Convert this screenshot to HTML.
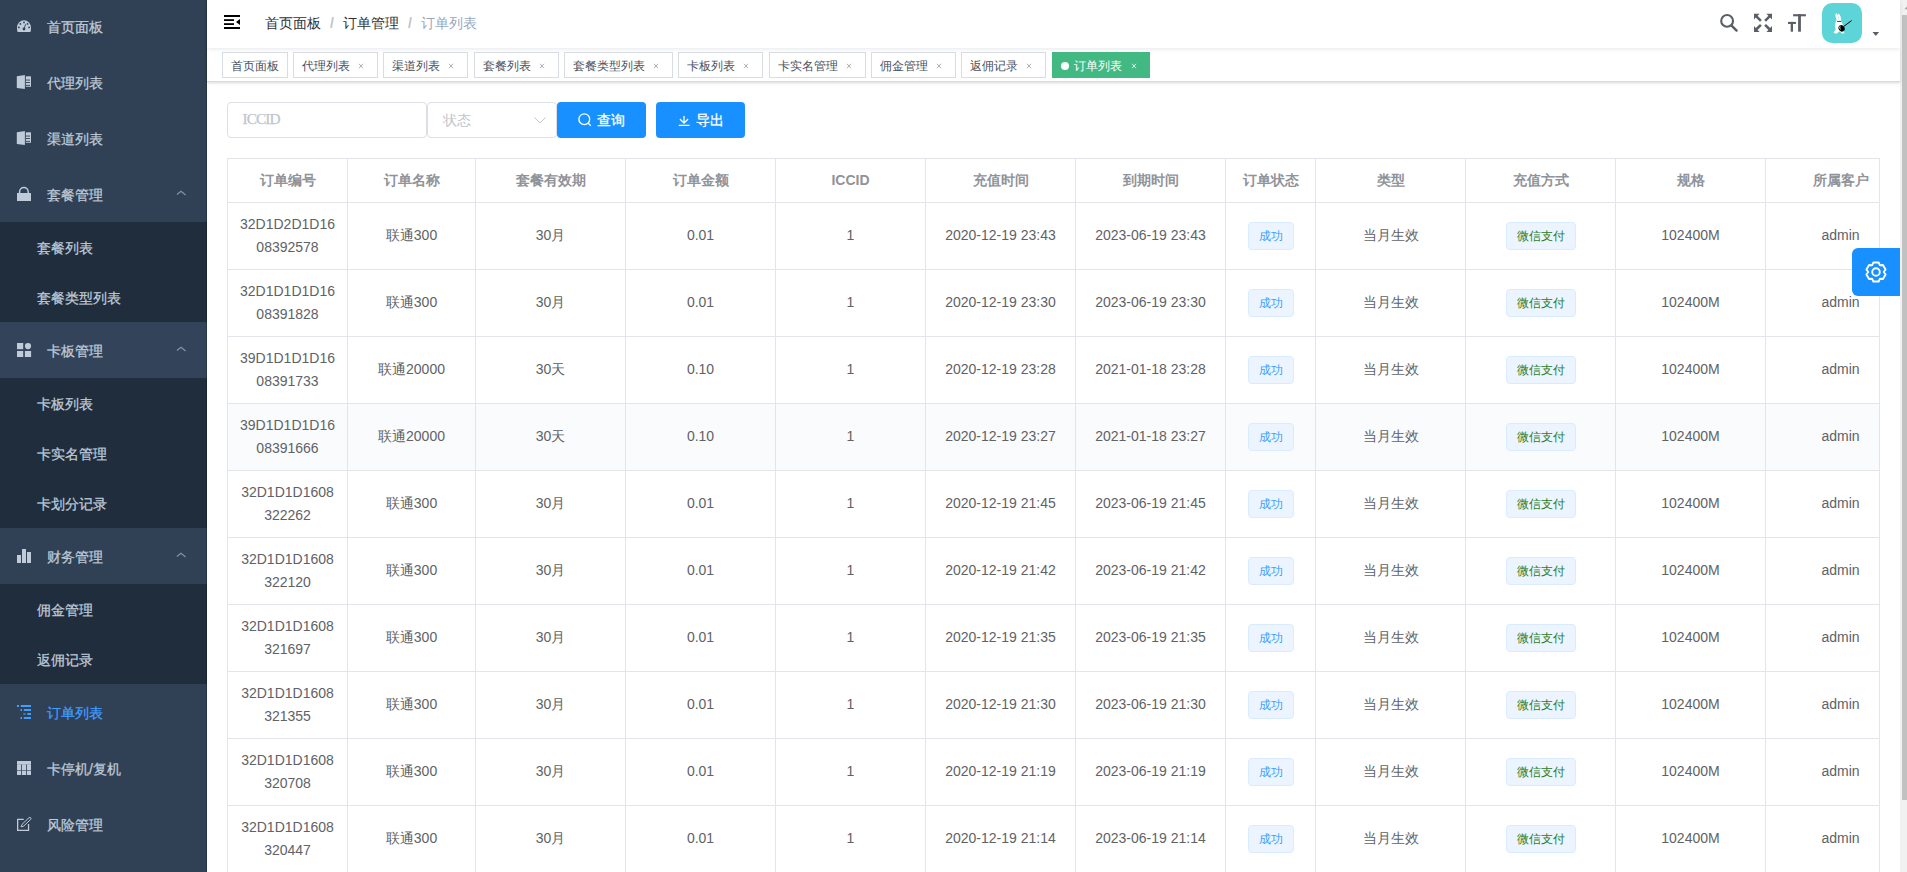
<!DOCTYPE html>
<html><head><meta charset="utf-8"><style>
*{box-sizing:border-box;margin:0;padding:0}
html,body{width:1907px;height:872px;overflow:hidden;background:#fff;font-family:"Liberation Sans",sans-serif;-webkit-font-smoothing:antialiased}
.abs{position:absolute}
/* sidebar */
.side{position:absolute;left:0;top:0;width:207px;height:872px;background:#304156;overflow:hidden}
.side .edge{position:absolute;left:206px;top:0;width:1px;height:872px;background:rgba(0,0,0,.18)}
.mi{position:absolute;left:0;width:207px;height:56px;line-height:56px;color:#bfcbd9;font-size:14px}
.mi .ic{position:absolute;left:15px;top:17px;width:18px;height:18px}
.mi .tx{position:absolute;left:47px;top:1px;-webkit-text-stroke:0.25px currentColor}
.mi .ar{position:absolute;left:176px;top:24px;width:10px;height:6px}
.sub{position:absolute;left:0;width:207px;background:#1f2d3d}
.si{position:absolute;left:0;width:207px;height:50px;line-height:50px;color:#bfcbd9;font-size:14px}
.si .tx{position:absolute;left:37px;top:1px;-webkit-text-stroke:0.25px currentColor}
.mi.act{color:#409eff}
/* navbar */
.nav{position:absolute;left:207px;top:0;width:1693px;height:48px;background:#fff;box-shadow:0 1px 4px rgba(0,21,41,.10);z-index:2}
.crumb{z-index:3}
.crumb{position:absolute;top:0;left:265px;height:48px;line-height:46px;font-size:14px;white-space:nowrap}
.crumb .a{color:#303133}
.crumb .sep{color:#c0c4cc;font-weight:bold;margin:0 9px}
.crumb .n{color:#97a8be}
/* tags */
.tags{position:absolute;left:207px;top:48px;width:1693px;height:34px;background:#fff;border-bottom:1px solid #dadada;box-shadow:0 1px 3px 0 rgba(0,0,0,.14),0 0 3px 0 rgba(0,0,0,.04);z-index:1}
.tg{position:absolute;top:4px;height:26px;line-height:26px;border:1px solid #d8dce5;color:#495060;background:#fff;font-size:12px;padding:0 8px;white-space:nowrap}
.tg .x{display:inline-block;width:15.5px;height:16px;vertical-align:-4px;color:#a0a6b0}.tg .x svg{position:relative;left:0px;top:0}
.tg.on{background:#42b983;border-color:#42b983;color:#fff}
.tg.on .x{color:#e8f5ee}
.tg.on .dot{display:inline-block;width:8px;height:8px;border-radius:50%;background:#fff;margin-right:2px;vertical-align:0px}
/* scrollbar */
.sb{position:absolute;left:1900px;top:0;width:7px;height:872px;background:#f1f1f1}
.sb .th{position:absolute;left:2px;top:15px;width:5px;height:785px;background:#c1c1c1}
/* filter */
.inp{position:absolute;top:102px;height:36px;border:1px solid #dcdfe6;border-radius:4px;background:#fff}
.ph{position:absolute;color:#c0c4cc;font-size:14px;line-height:34px}
.btn{position:absolute;top:102px;height:36px;width:89px;background:#1890ff;border-radius:4px;color:#fff;font-size:14px;line-height:36px}
/* table */
.tbl{position:absolute;left:227px;top:158px;width:1653px;height:760px;overflow:hidden;border-left:1px solid #e2e5ea;border-top:1px solid #e2e5ea}
.tbl::after{content:"";position:absolute;right:0;top:0;width:1px;height:100%;background:#e2e5ea}
table{border-collapse:separate;border-spacing:0;table-layout:fixed;width:1688px}
th,td{border-right:1px solid #e2e5ea;border-bottom:1px solid #e2e5ea;text-align:center;padding:10px 0;font-size:14px;vertical-align:middle}
th{color:#909399;font-weight:bold;height:44px}
td{color:#606266;height:67px}
.cell{line-height:23px;padding:0 10px;word-break:break-all}
tr.hover td{background:#fafbfd}
.tag{display:inline-block;height:28px;line-height:26px;padding:0 10px;font-size:12px;color:#409eff;background:#ecf5ff;border:1px solid #d9ecff;border-radius:4px;vertical-align:middle}
.tag.g{color:#2a7d2a}
.cell.s{position:relative;top:-1px}
/* right panel btn */
.rp{position:absolute;left:1852px;top:248px;width:48px;height:48px;background:#1890ff;border-radius:6px 0 0 6px}

.bt{-webkit-text-stroke:0.3px #fff}

</style></head><body>
<div class="side">
  <div class="mi" style="top:-2px"><svg class="ic" viewBox="0 0 18 18"><path d="M2.6 17 C2.1 15.6 2 14.5 2 12.5 A7 7.2 0 0 1 16 12.5 C16 14.5 15.9 15.6 15.4 17 Z" fill="#bfcbd9"/><g fill="#304156"><circle cx="5.4" cy="8.9" r="0.9"/><circle cx="9" cy="7.4" r="0.9"/><circle cx="12.5" cy="8.9" r="0.9"/><circle cx="3.9" cy="12.4" r="0.9"/><circle cx="14.1" cy="12.4" r="0.9"/><circle cx="9" cy="14" r="1.4"/></g><path d="M10.6 9.3 L9 14" stroke="#304156" stroke-width="0.9"/></svg><span class="tx">首页面板</span></div>
  <div class="mi" style="top:54px"><svg class="ic" viewBox="0 0 18 18"><path d="M1.8 5.2 L9.9 4 L9.9 18 L1.8 16.9 Z" fill="#bfcbd9"/><rect x="10.8" y="5.3" width="5.2" height="10.5" fill="#bfcbd9"/><g fill="#304156"><rect x="10.8" y="8.6" width="4.2" height="0.9"/><rect x="10.8" y="11.1" width="4.2" height="0.9"/><rect x="10.8" y="13.9" width="4.2" height="0.9"/></g></svg><span class="tx">代理列表</span></div>
  <div class="mi" style="top:110px"><svg class="ic" viewBox="0 0 18 18"><path d="M1.8 5.2 L9.9 4 L9.9 18 L1.8 16.9 Z" fill="#bfcbd9"/><rect x="10.8" y="5.3" width="5.2" height="10.5" fill="#bfcbd9"/><g fill="#304156"><rect x="10.8" y="8.6" width="4.2" height="0.9"/><rect x="10.8" y="11.1" width="4.2" height="0.9"/><rect x="10.8" y="13.9" width="4.2" height="0.9"/></g></svg><span class="tx">渠道列表</span></div>
  <div class="mi" style="top:166px"><svg class="ic" viewBox="0 0 18 18"><path d="M4.6 10.5 V8.8 A4.3 4.3 0 0 1 13.2 8.8 V10.5" fill="none" stroke="#bfcbd9" stroke-width="1.5"/><rect x="2" y="10" width="14" height="8" fill="#bfcbd9"/></svg><span class="tx">套餐管理</span><svg class="ar" viewBox="0 0 10 6"><path d="M0.9 4.5L5 1.3L9.6 5" fill="none" stroke="#8494a9" stroke-width="1.1"/></svg></div>
  <div class="sub" style="top:222px;height:100px">
    <div class="si" style="top:0"><span class="tx">套餐列表</span></div>
    <div class="si" style="top:50px"><span class="tx">套餐类型列表</span></div>
  </div>
  <div class="mi" style="top:322px;background:#33445a"><svg class="ic" viewBox="0 0 18 18"><g fill="#bfcbd9"><rect x="2" y="4" width="6.2" height="6.2"/><circle cx="13" cy="7.1" r="3.1"/><rect x="2" y="12" width="6.2" height="6.2"/><rect x="9.9" y="12" width="6.2" height="6.2"/></g></svg><span class="tx">卡板管理</span><svg class="ar" viewBox="0 0 10 6"><path d="M0.9 4.5L5 1.3L9.6 5" fill="none" stroke="#8494a9" stroke-width="1.1"/></svg></div>
  <div class="sub" style="top:378px;height:150px">
    <div class="si" style="top:0"><span class="tx">卡板列表</span></div>
    <div class="si" style="top:50px"><span class="tx">卡实名管理</span></div>
    <div class="si" style="top:100px"><span class="tx">卡划分记录</span></div>
  </div>
  <div class="mi" style="top:528px"><svg class="ic" viewBox="0 0 18 18"><g fill="#bfcbd9"><rect x="2" y="10" width="4" height="8"/><rect x="7" y="4" width="4" height="14"/><rect x="12" y="7" width="4" height="11"/></g></svg><span class="tx">财务管理</span><svg class="ar" viewBox="0 0 10 6"><path d="M0.9 4.5L5 1.3L9.6 5" fill="none" stroke="#8494a9" stroke-width="1.1"/></svg></div>
  <div class="sub" style="top:584px;height:100px">
    <div class="si" style="top:0"><span class="tx">佣金管理</span></div>
    <div class="si" style="top:50px"><span class="tx">返佣记录</span></div>
  </div>
  <div class="mi act" style="top:684px"><svg class="ic" viewBox="0 0 18 18"><g fill="#409eff"><rect x="2" y="4" width="2" height="2"/><rect x="5.8" y="4" width="10.2" height="2"/><rect x="5.5" y="8" width="1.5" height="2"/><rect x="8.8" y="8" width="7.2" height="2"/><rect x="8.3" y="12" width="2.5" height="2" opacity="0.6"/><rect x="12.4" y="12" width="3.6" height="2"/><rect x="5.5" y="16" width="1.5" height="2"/><rect x="8.8" y="16" width="7.2" height="2"/></g></svg><span class="tx">订单列表</span></div>
  <div class="mi" style="top:740px"><svg class="ic" viewBox="0 0 18 18"><rect x="2" y="4" width="14" height="14" fill="#bfcbd9"/><g fill="#304156"><rect x="6.2" y="7.6" width="0.8" height="10.4"/><rect x="11.2" y="7.6" width="0.8" height="10.4"/><rect x="2" y="13.2" width="14" height="0.6"/><rect x="2" y="7.3" width="14" height="0.5" opacity="0.35"/></g></svg><span class="tx">卡停机/复机</span></div>
  <div class="mi" style="top:796px"><svg class="ic" viewBox="0 0 18 18"><path d="M8.75 6.35 H2.65 V17.35 H13.55 V11.1" fill="none" stroke="#bfcbd9" stroke-width="1.3"/><path d="M6.1 13.9 L7.08 11.31 L13.97 4.73 A1.2 1.2 0 0 1 15.63 6.47 L8.74 13.05 Z" fill="none" stroke="#bfcbd9" stroke-width="1"/></svg><span class="tx">风险管理</span></div>
  <div class="edge"></div>
</div>
<div class="nav">
  <svg class="abs" style="left:17px;top:15px" width="16" height="14" viewBox="0 0 16 14"><rect x="0" y="0" width="16" height="2" fill="#000"/><rect x="0" y="4.2" width="10" height="1.8" fill="#000"/><rect x="0" y="8.2" width="10" height="1.8" fill="#000"/><rect x="0" y="12" width="16" height="2" fill="#000"/><path d="M16 4L12 7L16 10Z" fill="#000"/></svg>
</div>
<div class="crumb"><span class="a">首页面板</span><span class="sep">/</span><span class="a">订单管理</span><span class="sep">/</span><span class="n">订单列表</span></div>
<div class="tags">
  <div class="tg" style="left:15px">首页面板</div>
  <div class="tg" style="left:86px">代理列表 <span class="x"><svg width="16" height="16" viewBox="0 0 16 16"><path d="M6 5.8L10 10.2M10 5.8L6 10.2" stroke="currentColor" stroke-width="0.9"/></svg></span></div>
  <div class="tg" style="left:176px">渠道列表 <span class="x"><svg width="16" height="16" viewBox="0 0 16 16"><path d="M6 5.8L10 10.2M10 5.8L6 10.2" stroke="currentColor" stroke-width="0.9"/></svg></span></div>
  <div class="tg" style="left:267px">套餐列表 <span class="x"><svg width="16" height="16" viewBox="0 0 16 16"><path d="M6 5.8L10 10.2M10 5.8L6 10.2" stroke="currentColor" stroke-width="0.9"/></svg></span></div>
  <div class="tg" style="left:357px">套餐类型列表 <span class="x"><svg width="16" height="16" viewBox="0 0 16 16"><path d="M6 5.8L10 10.2M10 5.8L6 10.2" stroke="currentColor" stroke-width="0.9"/></svg></span></div>
  <div class="tg" style="left:471px">卡板列表 <span class="x"><svg width="16" height="16" viewBox="0 0 16 16"><path d="M6 5.8L10 10.2M10 5.8L6 10.2" stroke="currentColor" stroke-width="0.9"/></svg></span></div>
  <div class="tg" style="left:562px">卡实名管理 <span class="x"><svg width="16" height="16" viewBox="0 0 16 16"><path d="M6 5.8L10 10.2M10 5.8L6 10.2" stroke="currentColor" stroke-width="0.9"/></svg></span></div>
  <div class="tg" style="left:664px">佣金管理 <span class="x"><svg width="16" height="16" viewBox="0 0 16 16"><path d="M6 5.8L10 10.2M10 5.8L6 10.2" stroke="currentColor" stroke-width="0.9"/></svg></span></div>
  <div class="tg" style="left:754px">返佣记录 <span class="x"><svg width="16" height="16" viewBox="0 0 16 16"><path d="M6 5.8L10 10.2M10 5.8L6 10.2" stroke="currentColor" stroke-width="0.9"/></svg></span></div>
  <div class="tg on" style="left:845px"><span class="dot"></span> 订单列表 <span class="x"><svg width="16" height="16" viewBox="0 0 16 16"><path d="M6 5.8L10 10.2M10 5.8L6 10.2" stroke="currentColor" stroke-width="0.9"/></svg></span></div>
</div>
<div class="inp" style="left:227px;width:200px"><span class="ph" style="left:14.5px;top:-1.5px;font-family:'Liberation Serif',serif;font-size:15.3px;letter-spacing:-0.9px;-webkit-text-stroke:0.25px #c0c4cc">ICCID</span></div>
<div class="inp" style="left:427px;width:130px"><span class="ph" style="left:15px">状态</span><svg class="abs" style="left:106px;top:14px" width="12" height="7" viewBox="0 0 12 7"><path d="M0.5 0.5L6 6L11.5 0.5" fill="none" stroke="#c0c4cc" stroke-width="1"/></svg></div>
<div class="btn" style="left:557px"><svg class="abs" style="left:21px;top:11px" width="14" height="14" viewBox="0 0 14 14"><circle cx="6.3" cy="6.2" r="5.4" fill="none" stroke="#fff" stroke-width="1.35"/><path d="M10.1 10L12.8 12.7" stroke="#fff" stroke-width="1.35"/></svg><span class="abs bt" style="left:40px;top:0">查询</span></div>
<div class="btn" style="left:656px"><svg class="abs" style="left:22px;top:13px" width="12" height="11" viewBox="0 0 12 11"><path d="M6 1V8M1.9 4L6 8.1L10.1 4M0.8 10.4H11.6" fill="none" stroke="#fff" stroke-width="1.3"/></svg><span class="abs bt" style="left:40px;top:0">导出</span></div>
<svg class="abs" style="left:1700px;top:0;z-index:4" width="200" height="48" viewBox="1700 0 200 48">
 <g fill="none" stroke="#5a5e66" stroke-linecap="round">
  <circle cx="1727.1" cy="20.9" r="5.9" stroke-width="2.1"/>
  <path d="M1731.6 25.6L1736.6 30.6" stroke-width="2.4"/>
 </g>
 <g fill="#5a5e66">
  <path d="M1754 13.8H1759.6L1757.6 15.8L1761.8 20L1760 21.8L1755.8 17.6L1754 19.6Z"/>
  <path d="M1772 13.8H1766.4L1768.4 15.8L1764.2 20L1766 21.8L1770.2 17.6L1772 19.6Z"/>
  <path d="M1754 31.9H1759.6L1757.6 29.9L1761.8 25.7L1760 23.9L1755.8 28.1L1754 26.1Z"/>
  <path d="M1772 31.9H1766.4L1768.4 29.9L1764.2 25.7L1766 23.9L1770.2 28.1L1772 26.1Z"/>
  <rect x="1793.1" y="14.2" width="12.8" height="2.1"/>
  <rect x="1798.1" y="14.2" width="2.8" height="17.5"/>
  <rect x="1788" y="21.9" width="7.9" height="2.1"/>
  <rect x="1790.7" y="21.9" width="2.3" height="9.8"/>
  <path d="M1872.5 32H1879.1L1875.8 36.1Z"/>
 </g>
 <rect x="1822" y="3" width="40" height="40" rx="10" fill="#5dd5d8"/>
 <path d="M1836 13 C1837.5 14 1838.8 17 1839 20.5 L1837 20.5 C1835.5 18 1835 15 1836 13Z" fill="#fff"/>
 <path d="M1838.2 13.2 C1840 14.5 1841.3 17.5 1841.3 20.8 L1839.6 20.8 C1838.6 18 1837.8 15.5 1838.2 13.2Z" fill="#fff"/>
 <path d="M1836.3 20.3 C1839 19.8 1841.8 20.5 1842.2 23 C1843.5 26 1844 29 1843.5 31.5 L1844.6 33.2 L1842 33.4 L1839.5 31.2 L1836.4 33.7 L1833.6 32.8 L1835.6 29.5 C1834.8 26.5 1835 23 1836.3 20.3Z" fill="#fff"/>
 <ellipse cx="1841.6" cy="28.3" rx="2.9" ry="3.4" transform="rotate(-35 1841.6 28.3)" fill="#000"/>
 <path d="M1840.2 26.3 C1839.4 27.3 1839.5 28.8 1840.6 29.2" fill="none" stroke="#fff" stroke-width="0.9"/>
 <path d="M1843.5 26.6L1851.6 20.6" stroke="#000" stroke-width="1"/>
 <path d="M1837 21.5H1841.3" stroke="#222" stroke-width="0.8"/>
</svg>
<div class="tbl"><table><colgroup><col style="width:120px"><col style="width:128px"><col style="width:150px"><col style="width:150px"><col style="width:150px"><col style="width:150px"><col style="width:150px"><col style="width:90px"><col style="width:150px"><col style="width:150px"><col style="width:150px"><col style="width:150px"></colgroup><thead><tr><th><div class="cell">订单编号</div></th><th><div class="cell">订单名称</div></th><th><div class="cell">套餐有效期</div></th><th><div class="cell">订单金额</div></th><th><div class="cell">ICCID</div></th><th><div class="cell">充值时间</div></th><th><div class="cell">到期时间</div></th><th><div class="cell">订单状态</div></th><th><div class="cell">类型</div></th><th><div class="cell">充值方式</div></th><th><div class="cell">规格</div></th><th><div class="cell">所属客户</div></th></tr></thead><tbody><tr><td><div class="cell">32D1D2D1D16<br>08392578</div></td><td><div class="cell s">联通300</div></td><td><div class="cell s">30月</div></td><td><div class="cell s">0.01</div></td><td><div class="cell s">1</div></td><td><div class="cell s">2020-12-19 23:43</div></td><td><div class="cell s">2023-06-19 23:43</div></td><td><div class="cell"><span class="tag">成功</span></div></td><td><div class="cell s">当月生效</div></td><td><div class="cell"><span class="tag g">微信支付</span></div></td><td><div class="cell s">102400M</div></td><td><div class="cell s">admin</div></td></tr><tr><td><div class="cell">32D1D1D1D16<br>08391828</div></td><td><div class="cell s">联通300</div></td><td><div class="cell s">30月</div></td><td><div class="cell s">0.01</div></td><td><div class="cell s">1</div></td><td><div class="cell s">2020-12-19 23:30</div></td><td><div class="cell s">2023-06-19 23:30</div></td><td><div class="cell"><span class="tag">成功</span></div></td><td><div class="cell s">当月生效</div></td><td><div class="cell"><span class="tag g">微信支付</span></div></td><td><div class="cell s">102400M</div></td><td><div class="cell s">admin</div></td></tr><tr><td><div class="cell">39D1D1D1D16<br>08391733</div></td><td><div class="cell s">联通20000</div></td><td><div class="cell s">30天</div></td><td><div class="cell s">0.10</div></td><td><div class="cell s">1</div></td><td><div class="cell s">2020-12-19 23:28</div></td><td><div class="cell s">2021-01-18 23:28</div></td><td><div class="cell"><span class="tag">成功</span></div></td><td><div class="cell s">当月生效</div></td><td><div class="cell"><span class="tag g">微信支付</span></div></td><td><div class="cell s">102400M</div></td><td><div class="cell s">admin</div></td></tr><tr class="hover"><td><div class="cell">39D1D1D1D16<br>08391666</div></td><td><div class="cell s">联通20000</div></td><td><div class="cell s">30天</div></td><td><div class="cell s">0.10</div></td><td><div class="cell s">1</div></td><td><div class="cell s">2020-12-19 23:27</div></td><td><div class="cell s">2021-01-18 23:27</div></td><td><div class="cell"><span class="tag">成功</span></div></td><td><div class="cell s">当月生效</div></td><td><div class="cell"><span class="tag g">微信支付</span></div></td><td><div class="cell s">102400M</div></td><td><div class="cell s">admin</div></td></tr><tr><td><div class="cell">32D1D1D1608<br>322262</div></td><td><div class="cell s">联通300</div></td><td><div class="cell s">30月</div></td><td><div class="cell s">0.01</div></td><td><div class="cell s">1</div></td><td><div class="cell s">2020-12-19 21:45</div></td><td><div class="cell s">2023-06-19 21:45</div></td><td><div class="cell"><span class="tag">成功</span></div></td><td><div class="cell s">当月生效</div></td><td><div class="cell"><span class="tag g">微信支付</span></div></td><td><div class="cell s">102400M</div></td><td><div class="cell s">admin</div></td></tr><tr><td><div class="cell">32D1D1D1608<br>322120</div></td><td><div class="cell s">联通300</div></td><td><div class="cell s">30月</div></td><td><div class="cell s">0.01</div></td><td><div class="cell s">1</div></td><td><div class="cell s">2020-12-19 21:42</div></td><td><div class="cell s">2023-06-19 21:42</div></td><td><div class="cell"><span class="tag">成功</span></div></td><td><div class="cell s">当月生效</div></td><td><div class="cell"><span class="tag g">微信支付</span></div></td><td><div class="cell s">102400M</div></td><td><div class="cell s">admin</div></td></tr><tr><td><div class="cell">32D1D1D1608<br>321697</div></td><td><div class="cell s">联通300</div></td><td><div class="cell s">30月</div></td><td><div class="cell s">0.01</div></td><td><div class="cell s">1</div></td><td><div class="cell s">2020-12-19 21:35</div></td><td><div class="cell s">2023-06-19 21:35</div></td><td><div class="cell"><span class="tag">成功</span></div></td><td><div class="cell s">当月生效</div></td><td><div class="cell"><span class="tag g">微信支付</span></div></td><td><div class="cell s">102400M</div></td><td><div class="cell s">admin</div></td></tr><tr><td><div class="cell">32D1D1D1608<br>321355</div></td><td><div class="cell s">联通300</div></td><td><div class="cell s">30月</div></td><td><div class="cell s">0.01</div></td><td><div class="cell s">1</div></td><td><div class="cell s">2020-12-19 21:30</div></td><td><div class="cell s">2023-06-19 21:30</div></td><td><div class="cell"><span class="tag">成功</span></div></td><td><div class="cell s">当月生效</div></td><td><div class="cell"><span class="tag g">微信支付</span></div></td><td><div class="cell s">102400M</div></td><td><div class="cell s">admin</div></td></tr><tr><td><div class="cell">32D1D1D1608<br>320708</div></td><td><div class="cell s">联通300</div></td><td><div class="cell s">30月</div></td><td><div class="cell s">0.01</div></td><td><div class="cell s">1</div></td><td><div class="cell s">2020-12-19 21:19</div></td><td><div class="cell s">2023-06-19 21:19</div></td><td><div class="cell"><span class="tag">成功</span></div></td><td><div class="cell s">当月生效</div></td><td><div class="cell"><span class="tag g">微信支付</span></div></td><td><div class="cell s">102400M</div></td><td><div class="cell s">admin</div></td></tr><tr><td><div class="cell">32D1D1D1608<br>320447</div></td><td><div class="cell s">联通300</div></td><td><div class="cell s">30月</div></td><td><div class="cell s">0.01</div></td><td><div class="cell s">1</div></td><td><div class="cell s">2020-12-19 21:14</div></td><td><div class="cell s">2023-06-19 21:14</div></td><td><div class="cell"><span class="tag">成功</span></div></td><td><div class="cell s">当月生效</div></td><td><div class="cell"><span class="tag g">微信支付</span></div></td><td><div class="cell s">102400M</div></td><td><div class="cell s">admin</div></td></tr></tbody></table></div>
<div class="rp"><svg class="abs" style="left:0;top:0" width="48" height="48" viewBox="0 0 48 48"><path d="M27.79 30.93 L26.64 33.54 L21.36 33.54 L20.21 30.93 L19.89 30.75 L17.06 31.06 L14.42 26.48 L16.10 24.19 L16.10 23.81 L14.42 21.52 L17.06 16.94 L19.89 17.25 L20.21 17.07 L21.36 14.46 L26.64 14.46 L27.79 17.07 L28.11 17.25 L30.94 16.94 L33.58 21.52 L31.90 23.81 L31.90 24.19 L33.58 26.48 L30.94 31.06 L28.11 30.75Z" fill="none" stroke="#fff" stroke-width="1.9" stroke-linejoin="round"/><circle cx="24" cy="24" r="3.8" fill="none" stroke="#fff" stroke-width="1.9"/></svg></div>
<div class="sb" style="overflow:hidden"><svg class="abs" style="left:0;top:0" width="7" height="15" viewBox="1900 0 7 15"><path d="M1904.3 9.2L1907.5 6L1910.7 9.2Z" fill="#a3a3a3"/></svg><div class="th"></div></div>

</body></html>
